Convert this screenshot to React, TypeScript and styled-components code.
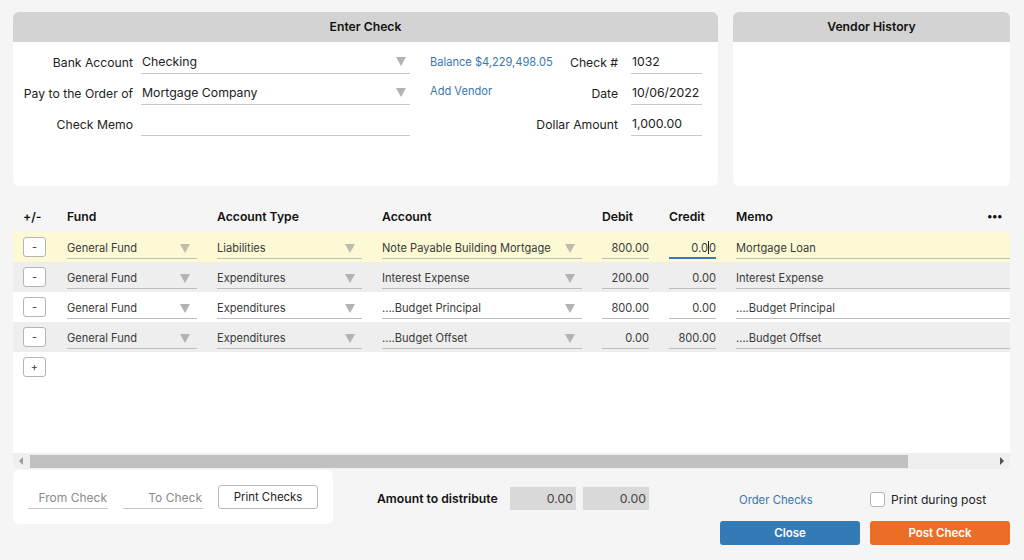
import React from 'react';
import styled, { createGlobalStyle } from 'styled-components';

const GlobalStyle = createGlobalStyle`
  html, body {
    margin: 0;
    padding: 0;
    background: #f5f5f5;
  }
  body {
    font-family: Inter, "Noto Sans", sans-serif;
    color: #222;
  }
`;

const Page = styled.div`
  width: 1024px;
  height: 560px;
  box-sizing: border-box;
  padding: 12px 14px 0 13px;
  display: flex;
  flex-direction: column;
`;

const TopRow = styled.div`
  display: flex;
  gap: 15px;
  height: 174px;
`;

const Card = styled.div<{ $width?: number }>`
  background: #fff;
  border-radius: 6px;
  overflow: hidden;
  display: flex;
  flex-direction: column;
  ${(p) => (p.$width ? `width: ${p.$width}px;` : 'flex: 1;')}
`;

const CardHeader = styled.div`
  height: 30px;
  line-height: 30px;
  background: #d3d3d3;
  text-align: center;
  font-size: 12.2px;
  font-weight: 600;
  color: #111;
`;

const FormGrid = styled.div`
  display: grid;
  grid-template-columns: 120px 269px 100px 97px 71px;
  grid-auto-rows: 24px;
  column-gap: 8px;
  row-gap: 7px;
  padding-top: 8px;
`;

const Label = styled.div<{ $pad?: number }>`
  font-size: 12.2px;
  color: #222;
  text-align: right;
  align-self: center;
  white-space: nowrap;
  padding-right: ${(p) => p.$pad ?? 0}px;
`;

const Field = styled.div`
  display: flex;
  align-items: center;
  justify-content: space-between;
  border-bottom: 1px solid #c9c9c9;
  font-size: 12.3px;
  color: #222;
  padding-left: 1px;
  padding-right: 4px;
  white-space: nowrap;
`;

const LinkText = styled.div<{ $nudge?: number }>`
  font-size: 11.1px;
  color: #3a76b0;
  padding-left: 12px;
  align-self: center;
  white-space: nowrap;
  margin-top: ${(p) => p.$nudge ?? 0}px;
`;

const Spacer = styled.div``;

const Caret = ({ light }: { light?: boolean }) => (
  <svg width="10" height="9" viewBox="0 0 10 9" style={{ flex: 'none' }}>
    <polygon points="0,0 10,0 5,9" fill={light ? '#bdbdae' : '#b3b3b3'} />
  </svg>
);

const GridPanel = styled.div`
  margin-top: 14px;
  display: flex;
  flex-direction: column;
`;

const cols = '24px 130px 145px 200px 47px 47px 1fr';

const HeadRow = styled.div`
  display: grid;
  grid-template-columns: ${cols};
  column-gap: 20px;
  padding-left: 10px;
  height: 32px;
  align-items: center;
  font-size: 12.2px;
  font-weight: 600;
  color: #111;
`;

const HeadCell = styled.div`
  display: flex;
  justify-content: space-between;
  align-items: center;
  white-space: nowrap;
`;

const Dots = styled.span`
  font-size: 11px;
  letter-spacing: -0.5px;
  margin-right: 8px;
`;

const Body = styled.div`
  background: #fff;
  height: 221px;
`;

const LineRow = styled.div<{ $bg: string }>`
  display: grid;
  grid-template-columns: ${cols};
  column-gap: 20px;
  padding-left: 10px;
  height: 30px;
  align-items: center;
  background: ${(p) => p.$bg};
`;

const SmallButton = styled.div`
  width: 21px;
  height: 18px;
  border: 1px solid #b5b5b5;
  border-radius: 3px;
  background: #fff;
  display: flex;
  align-items: center;
  justify-content: center;
  font-size: 11px;
  color: #444;
  line-height: 1;
`;

const CellField = styled.div<{ $right?: boolean; $focus?: boolean }>`
  height: 21px;
  display: flex;
  align-items: center;
  justify-content: ${(p) => (p.$right ? 'flex-end' : 'space-between')};
  border-bottom: ${(p) => (p.$focus ? '2px solid #337ab7' : '1px solid #bdbdbd')};
  font-size: 11.1px;
  color: #3a3a3a;
  padding-right: ${(p) => (p.$right ? 0 : 7)}px;
  white-space: nowrap;
  overflow: hidden;
  box-sizing: border-box;
  margin-top: 3px;
`;

const TextCaret = styled.span`
  display: inline-block;
  width: 1px;
  height: 13px;
  background: #222;
  vertical-align: middle;
`;

const ScrollBar = styled.div`
  height: 16px;
  background: #efefef;
  border-radius: 0 0 6px 6px;
  display: flex;
  align-items: center;
  padding: 0 4px 0 4px;
  gap: 5px;
`;

const Thumb = styled.div`
  height: 13px;
  width: 878px;
  background: #c1c1c1;
`;

const Fill = styled.div`
  flex: 1;
`;

const BottomRow = styled.div`
  margin-top: 1px;
  display: flex;
  align-items: flex-start;
`;

const PrintCard = styled.div`
  width: 320px;
  height: 54px;
  background: #fff;
  border-radius: 6px;
  display: flex;
  align-items: center;
  gap: 15px;
  padding-left: 15px;
  box-sizing: border-box;
`;

const RangeInput = styled.div`
  width: 80px;
  height: 24px;
  border-bottom: 1px solid #c6c6c6;
  display: flex;
  align-items: center;
  justify-content: flex-end;
  font-size: 12px;
  color: #8a8a8a;
  box-sizing: border-box;
  padding: 1px 1px 0 0;
`;

const OutlineButton = styled.div`
  width: 100px;
  height: 24px;
  box-sizing: border-box;
  border: 1px solid #b9b9b9;
  border-radius: 3px;
  display: flex;
  align-items: center;
  justify-content: center;
  font-size: 11.4px;
  color: #222;
`;

const Distribute = styled.div`
  margin-left: 44px;
  margin-top: 17px;
  height: 23px;
  display: flex;
  align-items: center;
  gap: 7px;
`;

const DistLabel = styled.div`
  font-size: 12.2px;
  font-weight: 600;
  color: #111;
  width: 126px;
  white-space: nowrap;
`;

const GrayBox = styled.div`
  width: 66px;
  height: 23px;
  background: #d9d9d9;
  display: flex;
  align-items: center;
  justify-content: flex-end;
  padding-right: 3px;
  box-sizing: border-box;
  font-size: 12.3px;
  color: #444;
`;

const Actions = styled.div`
  margin-left: auto;
  margin-top: 17px;
  width: 290px;
  display: grid;
  grid-template-columns: 140px 140px;
  grid-template-rows: 24px 24px;
  column-gap: 10px;
  row-gap: 10px;
`;

const OrderLink = styled.div`
  font-size: 11.3px;
  color: #3a76b0;
  padding-left: 19px;
  display: flex;
  align-items: center;
  margin-top: 2px;
`;

const CheckLine = styled.label`
  display: flex;
  align-items: center;
  gap: 6px;
  font-size: 12.1px;
  color: #222;
  white-space: nowrap;
`;

const Box = styled.span`
  width: 13px;
  height: 13px;
  border: 1px solid #b5b5b5;
  border-radius: 3px;
  background: #fff;
`;

const ActionButton = styled.div<{ $bg: string }>`
  background: ${(p) => p.$bg};
  color: #fff;
  border-radius: 3px;
  display: flex;
  align-items: center;
  justify-content: center;
  font-size: 11.5px;
  font-weight: 600;
  padding-bottom: 1px;
  box-sizing: border-box;
`;

type Line = {
  bg: string;
  fund: string;
  type: string;
  account: string;
  debit: string;
  credit: string;
  memo: string;
};

const lines: Line[] = [
  { bg: '#fdf9d5', fund: 'General Fund', type: 'Liabilities', account: 'Note Payable Building Mortgage', debit: '800.00', credit: '0.00', memo: 'Mortgage Loan' },
  { bg: '#eeeeee', fund: 'General Fund', type: 'Expenditures', account: 'Interest Expense', debit: '200.00', credit: '0.00', memo: 'Interest Expense' },
  { bg: '#ffffff', fund: 'General Fund', type: 'Expenditures', account: '....Budget Principal', debit: '800.00', credit: '0.00', memo: '....Budget Principal' },
  { bg: '#eeeeee', fund: 'General Fund', type: 'Expenditures', account: '....Budget Offset', debit: '0.00', credit: '800.00', memo: '....Budget Offset' },
];

const Arrow = ({ dir }: { dir: 'left' | 'right' }) => (
  <svg width="8" height="8" viewBox="0 0 8 8" style={{ flex: 'none' }}>
    <polygon points={dir === 'left' ? '6,0 6,8 2,4' : '2,0 2,8 6,4'} fill={dir === 'left' ? '#9a9a9a' : '#505050'} />
  </svg>
);

export default function App() {
  return (
    <>
      <GlobalStyle />
      <Page>
        <TopRow>
          <Card $width={705}>
            <CardHeader>Enter Check</CardHeader>
            <FormGrid>
              <Label>Bank Account</Label>
              <Field>
                Checking
                <Caret />
              </Field>
              <LinkText>Balance $4,229,498.05</LinkText>
              <Label $pad={5}>Check #</Label>
              <Field>1032</Field>

              <Label>Pay to the Order of</Label>
              <Field>
                Mortgage Company
                <Caret />
              </Field>
              <LinkText $nudge={-4}>Add Vendor</LinkText>
              <Label $pad={5}>Date</Label>
              <Field>10/06/2022</Field>

              <Label>Check Memo</Label>
              <Field />
              <Spacer />
              <Label $pad={5}>Dollar Amount</Label>
              <Field>1,000.00</Field>
            </FormGrid>
          </Card>
          <Card>
            <CardHeader>Vendor History</CardHeader>
          </Card>
        </TopRow>

        <GridPanel>
          <HeadRow>
            <HeadCell>+/-</HeadCell>
            <HeadCell>Fund</HeadCell>
            <HeadCell>Account Type</HeadCell>
            <HeadCell>Account</HeadCell>
            <HeadCell>Debit</HeadCell>
            <HeadCell>Credit</HeadCell>
            <HeadCell>
              Memo
              <Dots>•••</Dots>
            </HeadCell>
          </HeadRow>
          <Body>
            {lines.map((l, i) => (
              <LineRow key={i} $bg={l.bg}>
                <SmallButton>-</SmallButton>
                <CellField>
                  {l.fund}
                  <Caret light={i === 0} />
                </CellField>
                <CellField>
                  {l.type}
                  <Caret light={i === 0} />
                </CellField>
                <CellField>
                  {l.account}
                  <Caret light={i === 0} />
                </CellField>
                <CellField $right>{l.debit}</CellField>
                {i === 0 ? (
                  <CellField $right $focus>
                    0.0<TextCaret />0
                  </CellField>
                ) : (
                  <CellField $right>{l.credit}</CellField>
                )}
                <CellField>{l.memo}</CellField>
              </LineRow>
            ))}
            <LineRow $bg="#ffffff">
              <SmallButton>+</SmallButton>
            </LineRow>
          </Body>
          <ScrollBar>
            <Arrow dir="left" />
            <Thumb />
            <Fill />
            <Arrow dir="right" />
          </ScrollBar>
        </GridPanel>

        <BottomRow>
          <PrintCard>
            <RangeInput>From Check</RangeInput>
            <RangeInput>To Check</RangeInput>
            <OutlineButton>Print Checks</OutlineButton>
          </PrintCard>
          <Distribute>
            <DistLabel>Amount to distribute</DistLabel>
            <GrayBox>0.00</GrayBox>
            <GrayBox>0.00</GrayBox>
          </Distribute>
          <Actions>
            <OrderLink>Order Checks</OrderLink>
            <CheckLine>
              <Box />
              Print during post
            </CheckLine>
            <ActionButton $bg="#337ab7">Close</ActionButton>
            <ActionButton $bg="#ec6e26">Post Check</ActionButton>
          </Actions>
        </BottomRow>
      </Page>
    </>
  );
}
